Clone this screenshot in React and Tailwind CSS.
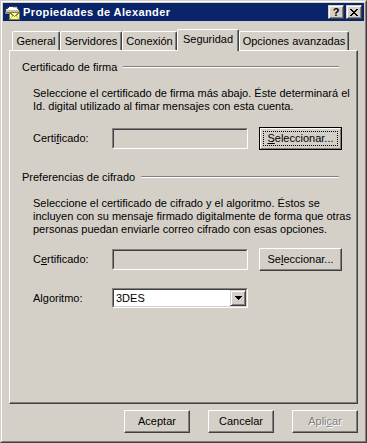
import React from "react";

const X_ROWS = [
  "11....11",
  ".11..11.",
  "..1111..",
  "...11...",
  "..1111..",
  ".11..11.",
  "11....11",
];

function PixelIcon({ rows, color = "#000" }) {
  const rects = [];
  rows.forEach((r, y) =>
    r.split("").forEach((c, x) => {
      if (c === "1") rects.push(<rect key={x + "-" + y} x={x} y={y} width="1" height="1" fill={color} />);
    })
  );
  return (
    <svg width={rows[0].length} height={rows.length} shapeRendering="crispEdges">
      {rects}
    </svg>
  );
}

function CaptionBtn({ children }) {
  return (
    <div className="w-[16px] h-[14px] bg-[#d4d0c8] border border-t-[#d4d0c8] border-l-[#d4d0c8] border-b-[#404040] border-r-[#404040] shadow-[inset_1px_1px_0_#fff,inset_-1px_-1px_0_#808080] flex items-center justify-center">
      {children}
    </div>
  );
}

function Btn({ children, w = "w-[66px]", def = false, disabled = false }) {
  const txt = disabled
    ? "text-[#808080] [text-shadow:1px_1px_0_#fff]"
    : "text-black";
  if (def) {
    return (
      <div className={`${w} h-[23px] border border-black`}>
        <div className="w-full h-full border border-t-white border-l-white border-b-[#808080] border-r-[#808080] p-[2px]">
          <div className={`w-full h-full border border-dotted border-black flex items-center justify-center ${txt}`}>
            {children}
          </div>
        </div>
      </div>
    );
  }
  return (
    <div
      className={`${w} h-[23px] bg-[#d4d0c8] border border-t-white border-l-white border-b-[#404040] border-r-[#404040] shadow-[inset_-1px_-1px_0_#808080] flex items-center justify-center ${txt}`}
    >
      {children}
    </div>
  );
}

function Sunken({ children, bg = "bg-[#d4d0c8]", h = "h-[21px]" }) {
  return (
    <div className={`w-[136px] ${h} border border-t-[#808080] border-l-[#808080] border-b-white border-r-white`}>
      <div className={`w-full h-full border border-t-[#404040] border-l-[#404040] border-b-[#d4d0c8] border-r-[#d4d0c8] ${bg} flex items-stretch`}>
        {children}
      </div>
    </div>
  );
}

function U({ children }) {
  return <span className="underline underline-offset-[1px]">{children}</span>;
}

function Header({ children }) {
  return (
    <div className="h-[13px] flex items-start pl-[12px] pr-[18px]">
      <span className="whitespace-nowrap">{children}</span>
      <div className="flex-1 ml-[6px] mt-[5px] h-[2px] border-t border-t-[#808080] border-b border-b-white" />
    </div>
  );
}

function Tab({ label, w, selected }) {
  if (selected) {
    return (
      <div
        className={`${w} h-[22px] relative z-10 bg-[#d4d0c8] border-t border-l border-r border-t-white border-l-white border-r-[#404040] rounded-tl-[2px] rounded-tr-[2px] shadow-[inset_-1px_0_0_#808080] flex justify-center pt-[3px] whitespace-nowrap`}
      >
        {label}
      </div>
    );
  }
  return (
    <div
      className={`${w} h-[19px] mb-px bg-[#d4d0c8] border-t border-l border-r border-t-white border-l-white border-r-[#404040] rounded-tl-[2px] rounded-tr-[2px] shadow-[inset_-1px_0_0_#808080] flex justify-center pt-[3px] whitespace-nowrap`}
    >
      {label}
    </div>
  );
}

function TitleIcon() {
  return (
    <svg width="16" height="16" viewBox="0 0 16 16" shapeRendering="crispEdges">
      <path d="M1 6 L6 2 L13 3 L15 6 L15 9 L1 9 Z" fill="#c0c0c0" stroke="#404040" strokeWidth="1" />
      <path d="M2 6 L6 3 L12 4 L14 6 Z" fill="#ffffff" />
      <rect x="1" y="8" width="14" height="2" fill="#808080" />
      <rect x="5.5" y="8.5" width="10" height="7" fill="#ffff99" stroke="#808040" strokeWidth="1" />
      <path d="M5.5 8.5 L10.5 12.5 L15.5 8.5" fill="none" stroke="#808040" strokeWidth="1" />
      <path d="M5.5 15.5 L9 12 M15.5 15.5 L12 12" fill="none" stroke="#c0c060" strokeWidth="1" />
    </svg>
  );
}

export default function App() {
  return (
    <div className="w-[367px] h-[443px] bg-[#d4d0c8] border border-t-[#d4d0c8] border-l-[#d4d0c8] border-b-[#404040] border-r-[#404040] text-[11px] leading-[13px] text-black [font-family:'Liberation_Sans',Arial,sans-serif]">
      <div className="w-full h-full border border-t-white border-l-white border-b-[#808080] border-r-[#808080] p-px flex flex-col">
        {/* Title bar */}
        <div className="h-[18px] shrink-0 bg-[#0a246a] flex items-center pl-px pr-[2px]">
          <TitleIcon />
          <span className="ml-[3px] text-white font-bold whitespace-nowrap tracking-[0.4px]">Propiedades de Alexander</span>
          <div className="flex-1" />
          <div className="flex gap-[2px]">
            <CaptionBtn>
              <span className="font-bold text-[11px] leading-[11px] text-black">?</span>
            </CaptionBtn>
            <CaptionBtn>
              <PixelIcon rows={X_ROWS} />
            </CaptionBtn>
          </div>
        </div>

        {/* Body */}
        <div className="flex-1 flex flex-col px-[6px]">
          {/* Tabs */}
          <div className="mt-[8px] h-[22px] -mb-px flex items-end pl-[3px]">
            <Tab label="General" w="w-[48px]" />
            <Tab label="Servidores" w="w-[62px]" />
            <Tab label="Conexión" w="w-[55px]" />
            <Tab label="Seguridad" w="w-[62px]" selected />
            <Tab label="Opciones avanzadas" w="w-[110px]" />
          </div>

          {/* Panel */}
          <div className="h-[354px] border border-t-white border-l-white border-b-[#404040] border-r-[#404040] shadow-[inset_-1px_-1px_0_#808080] flex flex-col">
            <div className="mt-[10px]">
              <Header>Certificado de firma</Header>
            </div>
            <div className="mt-[13px] pl-[23px] whitespace-nowrap">
              <div>Seleccione el certificado de firma más abajo. Éste determinará el</div>
              <div>Id. digital utilizado al fimar mensajes con esta cuenta.</div>
            </div>
            <div className="mt-[14px] pl-[23px] h-[23px] flex items-center">
              <div className="w-[79px]">
                Certi<U>f</U>icado:
              </div>
              <Sunken />
              <div className="ml-[11px]">
                <Btn w="w-[83px]" def>
                  <span>
                    <U>S</U>eleccionar...
                  </span>
                </Btn>
              </div>
            </div>

            <div className="mt-[21px]">
              <Header>Preferencias de cifrado</Header>
            </div>
            <div className="mt-[13px] pl-[23px] whitespace-nowrap">
              <div>Seleccione el certificado de cifrado y el algoritmo. Éstos se</div>
              <div>incluyen con su mensaje firmado digitalmente de forma que otras</div>
              <div>personas puedan enviarle correo cifrado con esas opciones.</div>
            </div>
            <div className="mt-[12px] pl-[23px] h-[23px] flex items-center">
              <div className="w-[79px]">
                C<U>e</U>rtificado:
              </div>
              <Sunken />
              <div className="ml-[11px]">
                <Btn w="w-[83px]">
                  <span>
                    Se<U>l</U>eccionar...
                  </span>
                </Btn>
              </div>
            </div>

            <div className="mt-[17px] pl-[23px] h-[20px] flex items-center">
              <div className="w-[79px]">Algoritmo:</div>
              <Sunken bg="bg-white" h="h-[20px]">
                <div className="flex-1 pl-[2px] flex items-center">3DES</div>
                <div className="w-[16px] bg-[#d4d0c8] border border-t-[#d4d0c8] border-l-[#d4d0c8] border-b-[#404040] border-r-[#404040] shadow-[inset_1px_1px_0_#fff,inset_-1px_-1px_0_#808080] flex items-center justify-center">
                  <svg width="7" height="4" shapeRendering="crispEdges">
                    <path d="M0 0h7v1h-1v1h-1v1h-1v1h-1v-1h-1v-1h-1v-1h-1z" fill="#000" />
                  </svg>
                </div>
              </Sunken>
            </div>
          </div>

          {/* Bottom buttons */}
          <div className="mt-[6px] flex justify-end gap-[18px]">
            <Btn>Aceptar</Btn>
            <Btn>Cancelar</Btn>
            <Btn disabled>
              <span>
                Apli<U>c</U>ar
              </span>
            </Btn>
          </div>
        </div>
      </div>
    </div>
  );
}
